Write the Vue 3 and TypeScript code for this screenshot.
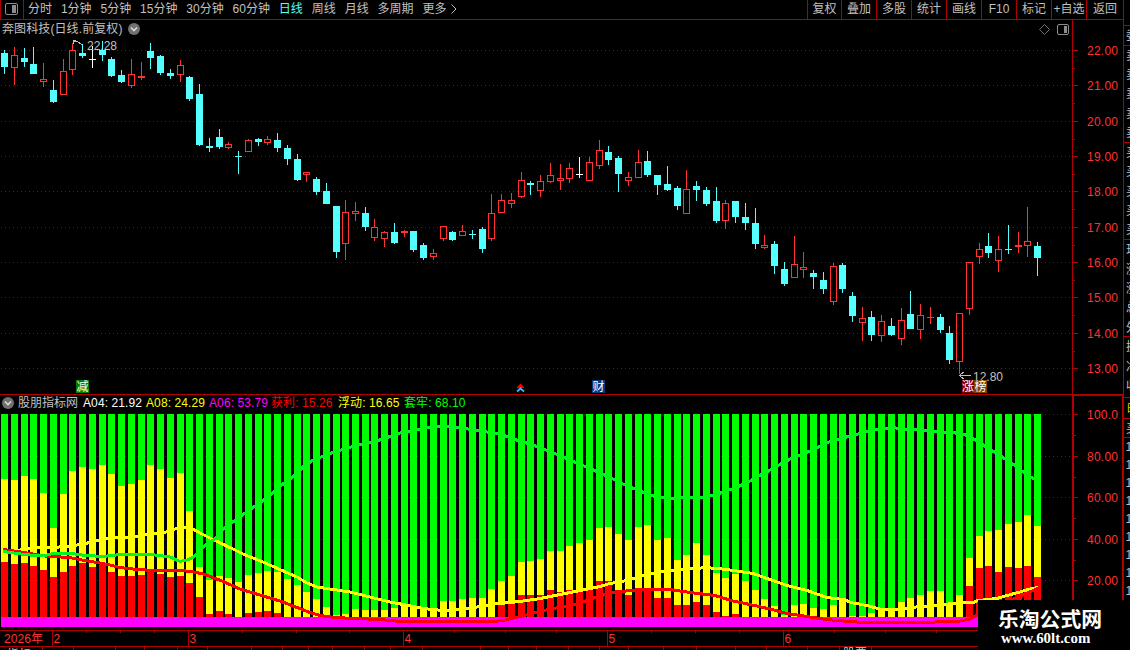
<script setup lang="ts">
type Kind = 'c' | 'r' | 'w'
interface Candle { x: number; high: number; top: number; bottom: number; low: number; kind: Kind }
interface Segment { x: number; y: number; h: number; fill: string }

const periods = ['分时', '1分钟', '5分钟', '15分钟', '30分钟', '60分钟', '日线', '周线', '月线', '多周期', '更多']
const tools = ['复权', '叠加', '多股', '统计', '画线', 'F10', '标记', '+自选', '返回']

const slot = (i: number): number => 4 + Math.round(i * 9.745 + 0.18)

// kind, high, body top, body bottom, low
const raw = `c 50 53 67 74|r 47 55 68 85|c 48 58 62 67|c 47 64 74 74|r 63 79 82 87|c 80 90 102 103|r 59 71 95 95|r 43 50 70 75|c 44 53 56 58|w 46 59 60 68
c 41 50 55 61|c 57 59 76 77|c 70 75 82 83|r 59 74 86 88|r 62 76 78 80|c 43 51 58 69|c 55 56 73 75|c 69 73 76 79|r 60 65 75 82|c 76 77 99 101
c 84 94 145 146|c 138 146 148 152|c 129 137 147 149|r 142 144 148 149|c 151 156 157 174|r 139 140 152 152|c 138 139 142 146|r 136 139 143 145|c 133 140 148 152|c 145 148 159 165
c 154 159 180 181|r 172 172 175 182|c 177 179 192 195|c 183 191 204 204|c 206 206 252 258|r 200 212 244 260|r 202 211 214 221|c 207 213 227 231|r 219 227 238 241|r 231 232 239 247
c 223 232 243 244|r 230 231 233 237|c 231 231 250 252|c 243 245 258 260|r 249 253 257 260|r 226 226 239 241|c 231 232 240 241|r 225 231 236 236|c 230 234 235 239|c 227 229 249 253
r 194 213 239 241|r 194 200 213 213|r 193 200 204 208|r 172 180 197 198|c 181 183 185 195|r 175 181 191 197|r 163 175 182 183|r 164 178 181 190|r 163 168 179 183|w 157 174 175 178
r 157 162 181 181|r 140 150 166 169|c 146 152 160 165|c 156 158 174 192|r 172 177 181 186|r 150 162 178 178|c 151 161 175 177|c 175 175 185 195|c 166 184 190 191|c 186 188 206 210
r 170 189 214 214|c 181 186 190 201|c 187 190 204 206|c 187 201 221 223|r 200 203 221 229|c 201 201 217 223|c 203 217 223 230|c 208 223 244 249|r 235 245 248 249|c 241 244 266 274
c 262 269 284 286|r 236 264 278 278|r 252 267 270 278|c 270 273 277 289|c 272 280 289 294|r 263 266 302 305|c 263 265 289 293|c 292 296 316 322|r 307 318 323 341|c 311 317 335 341
r 315 321 336 342|c 318 326 335 336|r 308 320 339 345|c 291 314 329 329|r 304 315 330 339|r 307 317 318 324|c 314 317 330 333|c 326 333 360 364|r 313 313 362 374|r 262 262 309 315
r 243 249 257 264|c 233 246 253 258|r 236 249 261 272|c 225 249 250 254|r 232 245 247 253|r 207 241 246 257|c 242 246 258 276`

const candles: Candle[] = raw.split(/[|\n]/).map((row, i) => {
  const [kind, high, top, bottom, low] = row.trim().split(' ')
  return { x: slot(i), high: +high, top: +top, bottom: +bottom, low: +low, kind: kind as Kind }
})
const tint: Record<Kind, string> = { c: '#54ffff', r: '#ff3232', w: '#ffffff' }
const isHollow = (c: Candle): boolean => c.kind === 'r' && c.bottom - c.top > 2

// Upper edges of the yellow and red segments, in thirds of a pixel below y = 400
const yellowTops = [
  237, 240, 228, 237, 279, 384, 282, 213, 201, 207, 195, 222, 258, 252, 240, 195, 207, 234, 219, 333,
  501, 540, 528, 534, 546, 525, 519, 513, 516, 537, 555, 576, 597, 621, 645, 642, 627, 630, 630, 630,
  624, 618, 618, 624, 624, 603, 603, 597, 594, 594, 567, 543, 528, 486, 483, 477, 453, 453, 438, 429,
  420, 384, 381, 402, 420, 381, 375, 420, 414, 480, 465, 429, 465, 519, 534, 522, 543, 570, 597, 618,
  645, 615, 612, 624, 627, 615, 594, 648, 648, 639, 627, 624, 606, 594, 585, 573, 573, 609, 585, 474,
  408, 393, 390, 372, 366, 345, 378,
]
const redHead = [
  486, 492, 489, 498, 510, 531, 516, 498, 489, 501, 489, 516, 528, 528, 525, 507, 522, 531, 528, 549,
  591, 642, 633, 642, 651, 639, 636, 633, 639,
]
const redMid = [
  615, 612, 585, 585, 585, 570, 576, 570, 570, 564, 543, 543, 570, 585, 564, 564, 594, 594, 615, 615,
  606, 615, 636, 648, 642,
]
const redTail = [558, 504, 498, 516, 501, 504, 498, 531]
const redTop = (i: number): number => {
  if (i < redHead.length) return redHead[i]
  if (i >= 51 && i < 76) return redMid[i - 51]
  if (i >= 99) return redTail[i - 99]
  return 651
}
const segments: Segment[] = yellowTops.flatMap((v, i) => {
  const x = slot(i) - 3
  const y = 400 + v / 3
  const r = Math.round(400 + redTop(i) / 3)
  return [
    { x, y: 414, h: y - 414, fill: '#00ff00' },
    { x, y, h: Math.max(0, r - y), fill: '#ffff00' },
    { x, y: r, h: Math.max(0, 617 - r), fill: '#ff0000' },
  ]
})

const yellowLine = '4,552 20,550 30,548.5 40,547.5 53,547.5 72,546 90,542.5 100,540 115,537 135,537 145,535 163,533 175,529 183,527 193,529 199,532.5 214,540 233,549 243,554 263,562 281,570 297,577 307,583 317,587 330,589 350,592 370,597 390,602 403,604.5 423,608.5 443,610.5 467,608.5 487,605.5 497,603.5 520,601.5 540,598.5 560,594.5 580,590.5 600,586.5 610,583.5 627,580.5 643,575.5 660,572 680,570 706,567.5 727,569.5 740,571.5 753,573.5 770,579.5 787,585.5 807,590.5 827,597.5 843,599.5 853,603 867,605.5 880,609 897,610 910,607.5 933,605.5 953,603.5 973,602.5 978,600.5 997,598.5 1007,595.5 1020,592 1028,589.5 1038,587.5'
const redLine = '3,549.5 10,550.5 24,552.5 33,554 45,556 55,556.5 72,558 82,560 97,562.5 110,565 120,567.5 137,569.5 155,570.5 180,570.5 192,571.5 205,574.5 222,581 240,589 260,595 280,601 297,607.5 310,612.5 320,615.5 335,617.5 355,618.5 380,619.5 390,620.5 402,621.5 495,621.5 505,620 520,616.5 530,614 550,609 565,606.5 580,603 595,597.5 612,592.5 635,590 650,589.5 670,589.5 690,592.5 715,595.5 733,601 750,604.5 770,609 787,613.5 807,616.5 823,619 837,620.5 863,622.5 923,622.5 960,621 970,619 977,615 990,605 1013,599 1038,588.5'
const greenLine = '3,551.5 14,553 24,554.5 43,556 53,553.5 72,553.5 82,555 102,556.5 121,554.5 150,554.5 160,555.5 170,557 180,561.5 189,559.5 194,556.5 199,551.5 207,543.5 214,539.5 223,529.5 233,522 248,511 258,504 268,497 283,484 293,477 303,467 313,460 333,452.5 353,446.5 366,443 378,440.5 390,436.5 400,433 415,430 428,427.5 445,426.5 465,428.5 480,431 500,434 515,439.5 530,444 550,451.5 570,460 590,468.5 610,477.5 625,485 640,491 655,496.5 670,498.5 690,497.5 705,497 715,495 735,488 750,481 770,470 790,459 810,451 830,441.5 850,436 866,432 880,429 892,427.5 903,429 923,430 937,432 953,432.5 968,435.5 977,441 987,447.5 997,453.5 1007,460 1017,467 1023,472 1034,479'

const priceTicks = [50, 85, 121, 156, 191, 227, 262, 297, 333, 368].map((y, i) => ({ y, label: `${22 - i}.00` }))
const minorTicks = [68, 103, 139, 174, 209, 245, 280, 315, 351]
const pctTicks = [
  { y: 414, label: '100.0' }, { y: 456, label: '80.00' }, { y: 497, label: '60.00' },
  { y: 539, label: '40.00' }, { y: 580, label: '20.00' },
]
const minorPct = [435, 477, 518, 560]

const readings = [
  { text: 'A04: 21.92', tone: 'white', w: 63 }, { text: 'A08: 24.29', tone: 'yellow', w: 63 },
  { text: 'A06: 53.79', tone: 'magenta', w: 62 }, { text: '获利: 15.26', tone: 'red', w: 67 },
  { text: '浮动: 16.65', tone: 'yellow', w: 66 }, { text: '套牢: 68.10', tone: 'green', w: 66 },
]
const months = [
  { x: 52, label: '2' }, { x: 188, label: '3' }, { x: 403, label: '4' }, { x: 607, label: '5' }, { x: 783, label: '6' },
]
const weekTicks = [86, 120, 154, 242, 296, 349, 454, 505, 556, 651, 695, 739, 834, 885, 936]
const tabTicks = [42, 73, 115, 144, 177, 207, 251, 282, 308, 332, 364, 390, 422, 480, 508, 536, 568, 599, 628, 663, 696, 735, 766, 807, 839, 871]

const stripLines = [25, 45, 142, 239, 336, 397, 418, 437]
const stripText = [
  { y: 40, t: '委' },
  ...[60, 79, 98, 118, 137].map((y) => ({ y, t: '卖' })),
  ...[157, 176, 196, 215, 234].map((y) => ({ y, t: '买' })),
  { y: 254, t: '现' }, { y: 274, t: '涨' }, { y: 293, t: '涨' }, { y: 312, t: '总' }, { y: 332, t: '外' },
  { y: 351, t: '换' }, { y: 371, t: '净' }, { y: 390, t: '收' },
]
const stripOnes = [441, 459, 477, 495, 513, 531, 549, 567, 585]
</script>

<template>
  <div class="screen">
    <nav class="toolbar">
      <div class="toggle">
        <svg width="13" height="12" viewBox="0 0 13 12">
          <rect x="0.5" y="0.5" width="12" height="11" rx="1.5" fill="none" stroke="#8c8c8c" />
          <rect x="7" y="2" width="4" height="8" fill="#8c8c8c" />
        </svg>
      </div>
      <div class="periods">
        <span v-for="p in periods" :key="p" :class="{ active: p === '日线' }">{{ p }}</span>
        <svg class="more" width="6" height="10" viewBox="0 0 6 10"><path d="M0.5 0.5 L5 5 L0.5 9.5" fill="none" stroke="#c0c0c0" /></svg>
      </div>
      <div class="tools">
        <span v-for="t in tools" :key="t">{{ t }}</span>
      </div>
    </nav>

    <div class="body">
      <div class="charts">
        <header class="title">
          <span class="name">奔图科技(日线.前复权)</span>
          <svg class="disc" width="12" height="12" viewBox="0 0 12 12">
            <circle cx="6" cy="6" r="6" fill="#707070" /><path d="M3 4.5 L6 7.5 L9 4.5" fill="none" stroke="#d8d8d8" stroke-width="1.6" />
          </svg>
          <span class="grow" />
          <svg width="32" height="13" viewBox="0 0 32 13">
            <path d="M6.500 1.500 L11.500 6.500 L6.500 11.500 L1.500 6.500 Z" fill="none" stroke="#707070" />
            <rect x="19.500" y="1.500" width="11" height="10" rx="1.500" fill="none" stroke="#8c8c8c" />
            <rect x="26" y="3" width="3" height="7" fill="#8c8c8c" />
          </svg>
        </header>

        <svg class="price" width="1072" height="357" viewBox="0 38 1072 357">
          <g shape-rendering="crispEdges">
            <line v-for="t in priceTicks" :key="t.y" x1="1" x2="1072" :y1="t.y + 0.5" :y2="t.y + 0.5" class="grid" />
            <g v-for="c in candles" :key="c.x" :fill="tint[c.kind]" :stroke="tint[c.kind]">
              <template v-if="isHollow(c)">
                <rect :x="c.x" :y="c.high" width="1" :height="c.top - c.high" stroke="none" />
                <rect :x="c.x" :y="c.bottom" width="1" :height="c.low - c.bottom" stroke="none" />
                <rect :x="c.x - 2.5" :y="c.top + 0.5" width="6" :height="c.bottom - c.top - 1" fill="none" />
              </template>
              <template v-else>
                <rect :x="c.x" :y="c.high" width="1" :height="c.low - c.high" stroke="none" />
                <rect :x="c.x - 3" :y="c.top" width="7" :height="c.bottom - c.top" stroke="none" />
              </template>
            </g>
            <path d="M73.500 44 V40.500 H76 M73 41.500 H77 L82 44.500" class="pointer" />
            <path d="M960 375.500 H971 M963.500 372 L959.500 375.500 L963.500 379" class="pointer" />
          </g>
          <text x="87" y="50" textLength="30" class="mark">22.28</text>
          <text x="973" y="381" textLength="30" class="mark">12.80</text>
          <g class="badge">
            <rect x="76" y="380" width="13" height="13" fill="#008000" /><text x="76.500" y="391">减</text>
            <rect x="592" y="380" width="13" height="13" fill="#003a80" /><text x="592.500" y="391">财</text>
            <rect x="962" y="380" width="12" height="13" fill="#800000" /><text x="962" y="391">涨</text>
            <rect x="974" y="380" width="13" height="13" fill="#804000" /><text x="974.500" y="391">榜</text>
          </g>
          <path d="M516.500 388 L520.500 383.500 L524.500 388 Z" fill="#ff0000" />
          <path d="M517 391.500 L520.500 388.500 L524 391.500" fill="none" stroke="#39b5ff" stroke-width="1.800" />
          <rect x="0" y="394" width="1072" height="1" fill="#b00000" />
        </svg>

        <header class="legend">
          <svg class="disc" width="12" height="12" viewBox="0 0 12 12">
            <circle cx="6" cy="6" r="6" fill="#707070" /><path d="M3 4.500 L6 7.500 L9 4.500" fill="none" stroke="#d8d8d8" stroke-width="1.600" />
          </svg>
          <span class="name">股朋指标网</span>
          <span v-for="r in readings" :key="r.text" :class="['reading', r.tone]" :style="{ width: r.w + 'px' }">{{ r.text }}</span>
        </header>

        <svg class="volume" width="1072" height="216" viewBox="0 414 1072 216" shape-rendering="crispEdges">
          <line v-for="t in pctTicks" :key="t.y" x1="1" x2="1072" :y1="t.y + 0.5" :y2="t.y + 0.5" class="grid" />
          <rect v-for="(s, i) in segments" :key="i" :x="s.x" :y="s.y" width="7" :height="s.h" :fill="s.fill" />
          <rect x="1" y="617" width="1040" height="10" fill="#ff00ff" />
          <polyline :points="yellowLine" class="curve" stroke="#ffff00" />
          <polyline :points="redLine" class="curve" stroke="#ff0000" />
          <polyline :points="greenLine" class="curve" stroke="#00f61c" />
        </svg>

        <svg class="dates" width="1072" height="20" viewBox="0 630 1072 20">
          <g shape-rendering="crispEdges" fill="#b00000">
            <rect x="0" y="630" width="1072" height="1" />
            <rect x="0" y="646" width="1072" height="1" />
            <rect v-for="x in weekTicks" :key="x" :x="x" y="630" width="1" height="3" />
            <rect v-for="m in months" :key="m.x" :x="m.x" y="630" width="1" height="16" />
            <rect v-for="x in tabTicks" :key="x" :x="x" y="647" width="1" height="3" />
          </g>
          <text x="4" y="643" textLength="39" class="scale">2026年</text>
          <text v-for="m in months" :key="m.label" :x="m.x + 1.500" y="643" class="scale">{{ m.label }}</text>
          <text x="7" y="659" class="mark">指标</text>
          <text x="843" y="658" class="mark cyan">股票</text>
        </svg>
      </div>

      <svg class="axis" width="58" height="630" viewBox="1072 20 58 630">
        <g shape-rendering="crispEdges" fill="#b00000">
          <rect x="1072" y="20" width="1" height="375" />
          <rect x="1072" y="394" width="51" height="2" />
          <rect x="1072" y="395" width="2" height="255" />
          <rect x="1123" y="20" width="1" height="630" />
          <rect x="1122" y="395" width="2" height="255" />
          <rect v-for="t in priceTicks" :key="t.y" x="1072" :y="t.y" width="6" height="1" />
          <rect v-for="y in minorTicks" :key="y" x="1072" :y="y" width="3" height="1" />
          <rect v-for="t in pctTicks" :key="t.y" x="1073" :y="t.y" width="5" height="1" />
          <rect v-for="y in minorPct" :key="y" x="1073" :y="y" width="3" height="1" />
          <rect v-for="y in stripLines" :key="y" x="1124" :y="y" width="6" height="1" />
        </g>
        <text v-for="t in priceTicks" :key="t.y" x="1087" :y="t.y + 5" textLength="31" class="scale">{{ t.label }}</text>
        <text v-for="t in pctTicks" :key="t.y" x="1087" :y="t.y + 5" textLength="31" class="scale">{{ t.label }}</text>
        <text v-for="s in stripText" :key="s.y" x="1126" :y="s.y" class="mark">{{ s.t }}</text>
        <text x="1127" y="413" class="mark gold">时</text>
        <text x="1126" y="433" class="mark">买</text>
        <text v-for="y in stripOnes" :key="y" x="1125.500" :y="y + 10" class="mark">1</text>
      </svg>
    </div>

    <aside class="watermark">
      <strong>乐淘公式网</strong>
      <em>www.60lt.com</em>
    </aside>
  </div>
</template>

<style>
body {
  background: #000;
  overflow: hidden;
}
</style>

<style scoped>
.screen {
  position: relative;
  width: 1130px;
  height: 650px;
  overflow: hidden;
  background: #000;
  color: #c0c0c0;
  font: 12px/15px "Liberation Sans", "Noto Sans CJK SC", sans-serif;
  white-space: nowrap;
}
svg {
  display: block;
  flex: none;
}
.toolbar {
  display: flex;
  box-sizing: border-box;
  width: 1124px;
  height: 20px;
  border-bottom: 1px solid #b00000;
}
.toggle {
  display: flex;
  align-items: flex-start;
  box-sizing: border-box;
  width: 24px;
  padding: 3px 0 0 4px;
  border-left: 1px solid #b00000;
  border-right: 1px solid #b00000;
}
.periods {
  display: flex;
  gap: 8.9px;
  padding: 2px 0 0 4px;
}
.periods .active {
  color: #54ffff;
}
.more {
  margin: 2px 0 0 -4px;
}
.tools {
  display: flex;
  margin-left: auto;
  border-right: 1px solid #b00000;
}
.tools span {
  box-sizing: border-box;
  width: 35px;
  padding-top: 2px;
  border-left: 1px solid #b00000;
  text-align: center;
}
.tools span:first-child {
  width: 34px;
}
.tools span:last-child {
  width: 37px;
}
.body {
  display: flex;
}
.charts {
  width: 1072px;
}
.title {
  display: flex;
  align-items: center;
  box-sizing: border-box;
  height: 18px;
  padding: 0 2px 0 2px;
}
.title .name {
  padding-top: 1px;
  letter-spacing: 0.1px;
}
.title .disc {
  margin-left: 5px;
}
.grow {
  flex: 1;
}
.legend {
  display: flex;
  align-items: center;
  height: 19px;
  padding: 0 0 0 2px;
}
.legend .disc {
  margin-top: -3px;
}
.legend .name {
  width: 65px;
  margin: -2px 0 0 4px;
}
.reading {
  margin-top: -2px;
  letter-spacing: 0.1px;
}
.white {
  color: #fff;
}
.yellow {
  color: #ff0;
}
.magenta {
  color: #f0f;
}
.red {
  color: #f00;
}
.green {
  color: #0f0;
}
.grid {
  stroke: #a00000;
  stroke-dasharray: 1 3;
}
.pointer {
  fill: none;
  stroke: #c0c0c0;
}
.curve {
  fill: none;
  stroke-width: 3;
  stroke-linejoin: round;
}
.mark {
  fill: #c0c0c0;
}
.cyan {
  fill: #54ffff;
}
.gold {
  fill: #d8d800;
}
.scale {
  fill: #ff3232;
}
.badge text {
  fill: #fff;
}
.watermark {
  position: absolute;
  left: 978px;
  top: 600px;
  display: flex;
  flex-direction: column;
  box-sizing: border-box;
  width: 152px;
  height: 50px;
  padding-top: 6px;
  background: #000;
  color: #fff;
}
.watermark strong {
  padding-left: 20px;
  font: bold 20.8px/24px "Noto Sans CJK SC", sans-serif;
}
.watermark em {
  padding-left: 23px;
  font: bold 14.9px/17px "Liberation Serif", serif;
}
</style>
